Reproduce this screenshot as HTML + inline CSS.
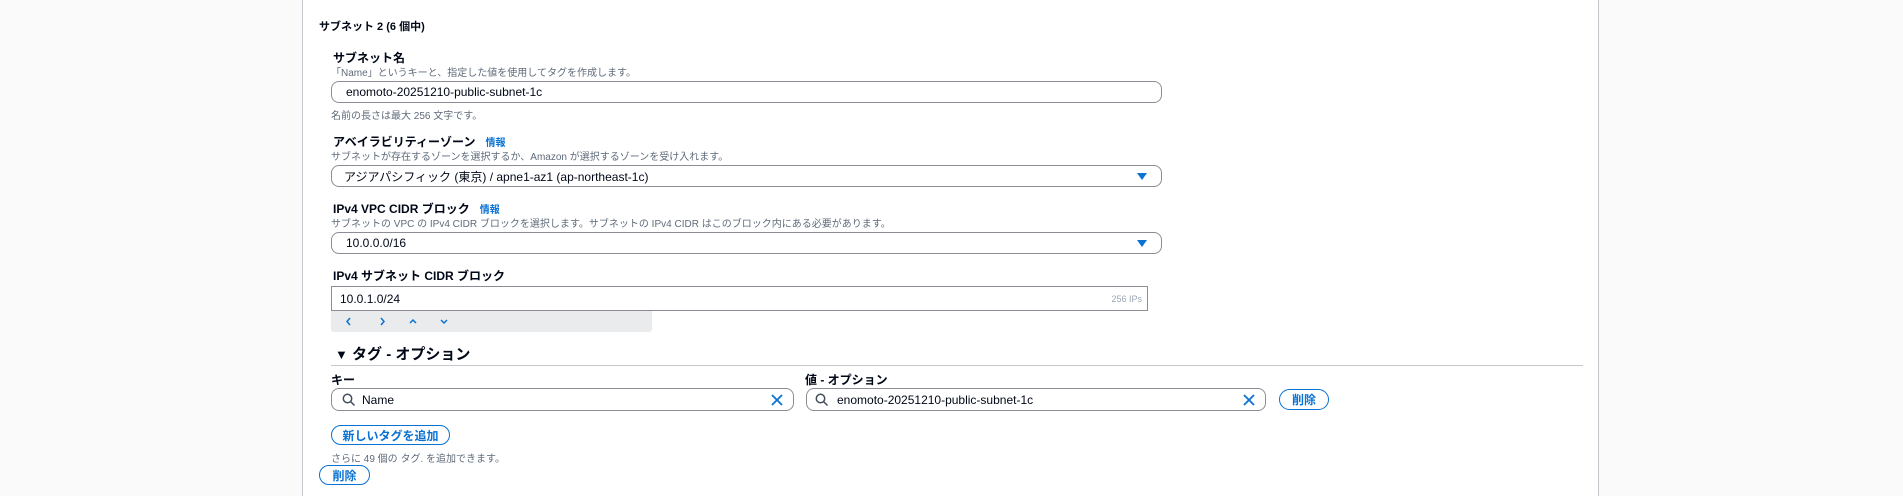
<!DOCTYPE html>
<html><head><meta charset="utf-8"><style>
body{margin:0;width:1903px;height:496px;background:#fff;position:relative;overflow:hidden;font-family:"Liberation Sans","Noto Sans CJK JP",sans-serif;color:#000716}
.a{position:absolute;white-space:nowrap}
.lb{font-size:12px;font-weight:bold}
.ds{font-size:10px;color:#5f6b7a}
.in{position:absolute;box-sizing:border-box;border:1px solid #8c8c94;border-radius:8px;background:#fff;font-size:12px;padding-left:14px;display:flex;align-items:center}
.info{color:#0972d3;font-size:10px;font-weight:bold;margin-left:10px}
.btn{position:absolute;box-sizing:border-box;border:1.5px solid #0972d3;border-radius:12px;color:#0972d3;font-size:12px;font-weight:bold;display:flex;align-items:center;justify-content:center}
.tri{position:absolute;right:14px;top:7px;width:0;height:0;border-left:5px solid transparent;border-right:5px solid transparent;border-top:7px solid #0972d3}
</style></head><body>
<div class="a" style="left:0;top:0;width:303px;height:496px;background:#fafafa"></div>
<div class="a" style="left:1599px;top:0;width:304px;height:496px;background:#fafafa"></div>
<div class="a" style="left:302px;top:0;width:1px;height:496px;background:#c6c6cd"></div>
<div class="a" style="left:1598px;top:0;width:1px;height:496px;background:#c6c6cd"></div>

<div class="a lb" style="left:319px;top:18px;font-size:11px">サブネット 2 (6 個中)</div>

<div class="a lb" style="left:333px;top:49px">サブネット名</div>
<div class="a ds" style="left:331px;top:64px">「Name」というキーと、指定した値を使用してタグを作成します。</div>
<div class="in" style="left:331px;top:81px;width:831px;height:22px">enomoto-20251210-public-subnet-1c</div>
<div class="a ds" style="left:331px;top:107px">名前の長さは最大 256 文字です。</div>

<div class="a lb" style="left:333px;top:133px">アベイラビリティーゾーン<span class="info">情報</span></div>
<div class="a ds" style="left:331px;top:148px">サブネットが存在するゾーンを選択するか、Amazon が選択するゾーンを受け入れます。</div>
<div class="in" style="left:331px;top:165px;width:831px;height:22px;padding-left:12px">アジアパシフィック (東京) / apne1-az1 (ap-northeast-1c)<div class="tri"></div></div>

<div class="a lb" style="left:333px;top:200px">IPv4 VPC CIDR ブロック<span class="info">情報</span></div>
<div class="a ds" style="left:331px;top:215px">サブネットの VPC の IPv4 CIDR ブロックを選択します。サブネットの IPv4 CIDR はこのブロック内にある必要があります。</div>
<div class="in" style="left:331px;top:232px;width:831px;height:22px">10.0.0.0/16<div class="tri"></div></div>

<div class="a lb" style="left:333px;top:267px">IPv4 サブネット CIDR ブロック</div>
<div class="in" style="left:331px;top:286px;width:817px;height:25px;border-radius:0;padding-left:8px">10.0.1.0/24<span style="position:absolute;right:5px;font-size:9px;color:#9ba7b6">256 IPs</span></div>
<div class="a" style="left:331px;top:311px;width:321px;height:21px;background:#e9ebed;border-radius:0 0 3px 3px"></div>
<svg class="a" style="left:331px;top:311px" width="140" height="21" fill="none" stroke="#0972d3" stroke-width="1.5"><path d="M19 7l-3 3.5 3 3.5"/><path d="M50 7l3 3.5-3 3.5"/><path d="M79 12l3-3 3 3"/><path d="M110 9l3 3 3-3"/></svg>

<div class="a" style="left:335px;top:343px;font-size:15px;font-weight:bold"><span style="font-size:13px">▼</span> タグ - オプション</div>
<div class="a" style="left:331px;top:365px;width:1252px;height:1px;background:#c6c6cd"></div>
<div class="a lb" style="left:331px;top:371px">キー</div>
<div class="a lb" style="left:805px;top:371px">値 - オプション</div>
<div class="in" style="left:331px;top:388px;width:463px;height:23px;padding-left:30px">Name</div>
<div class="in" style="left:806px;top:388px;width:460px;height:23px;padding-left:30px">enomoto-20251210-public-subnet-1c</div>
<svg class="a" style="left:342px;top:393px" width="14" height="14" fill="none" stroke="#414d5c" stroke-width="1.5"><circle cx="5.5" cy="5.5" r="4.2"/><path d="M8.5 8.5l4 4"/></svg>
<svg class="a" style="left:815px;top:393px" width="14" height="14" fill="none" stroke="#414d5c" stroke-width="1.5"><circle cx="5.5" cy="5.5" r="4.2"/><path d="M8.5 8.5l4 4"/></svg>
<svg class="a" style="left:771px;top:394px" width="12" height="12" stroke="#0972d3" stroke-width="1.8"><path d="M1 1l10 10M11 1L1 11"/></svg>
<svg class="a" style="left:1243px;top:394px" width="12" height="12" stroke="#0972d3" stroke-width="1.8"><path d="M1 1l10 10M11 1L1 11"/></svg>
<div class="btn" style="left:1279px;top:389px;width:50px;height:21px">削除</div>

<div class="btn" style="left:331px;top:425px;width:119px;height:20px">新しいタグを追加</div>
<div class="a ds" style="left:331px;top:450px">さらに 49 個の タグ. を追加できます。</div>
<div class="btn" style="left:319px;top:465px;width:51px;height:20px">削除</div>
</body></html>
